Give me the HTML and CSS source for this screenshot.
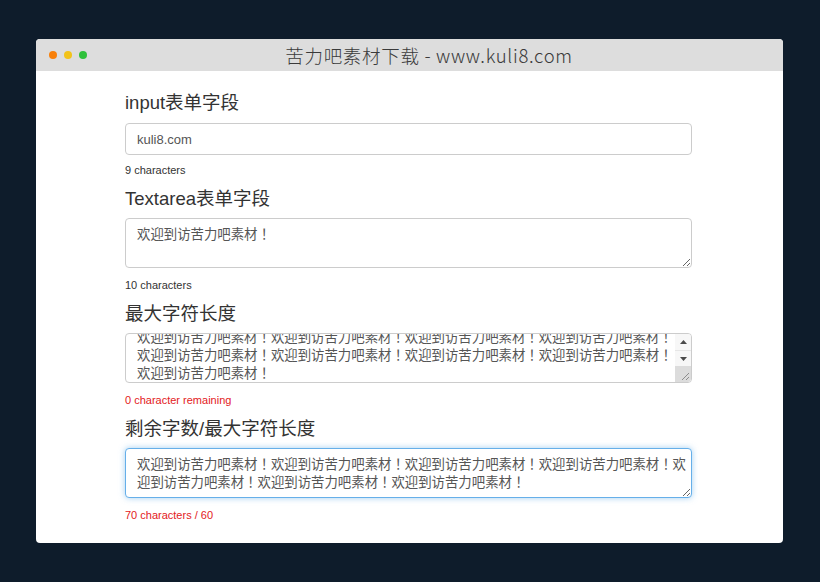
FILE: index.html
```html
<!DOCTYPE html>
<html lang="zh-CN">
<head>
<meta charset="utf-8">
<title>苦力吧素材下载</title>
<link rel="stylesheet" href="styles.css">
</head>
<body>
<div class="window">
  <div class="titlebar">
    <div class="dots">
      <span class="dot dot-orange"></span>
      <span class="dot dot-yellow"></span>
      <span class="dot dot-green"></span>
    </div>
    <div class="title">苦力吧素材下载 - www.kuli8.com</div>
  </div>
  <div class="content">
    <form class="form">
      <div class="group">
        <label class="label">input表单字段</label>
        <input class="control input" type="text" value="kuli8.com">
        <div class="count count-first">9 characters</div>
      </div>
      <div class="group">
        <label class="label">Textarea表单字段</label>
        <textarea class="control area" lang="ja">欢迎到访苦力吧素材！</textarea>
        <div class="count">10 characters</div>
      </div>
      <div class="group">
        <label class="label">最大字符长度</label>
        <div class="control fake-area">
          <div class="fake-view">
            <div class="fake-text" lang="ja">欢迎到访苦力吧素材！欢迎到访苦力吧素材！欢迎到访苦力吧素材！欢迎到访苦力吧素材！欢迎到访苦力吧素材！欢迎到访苦力吧素材！欢迎到访苦力吧素材！欢迎到访苦力吧素材！欢迎到访苦力吧素材！</div>
          </div>
          <div class="sbar">
            <span class="sb-btn">
              <svg width="7" height="4" viewBox="0 0 7 4"><polygon points="3.5,0 7,4 0,4" fill="#4a4a4a"/></svg>
            </span>
            <span class="sb-btn">
              <svg width="7" height="4" viewBox="0 0 7 4"><polygon points="0,0 7,0 3.5,4" fill="#4a4a4a"/></svg>
            </span>
            <span class="sb-corner">
              <svg width="16" height="16" viewBox="0 0 16 16"><path d="M14 7 L7 14 M14 11 L11 14" stroke="#8c8c8c" stroke-width="1" fill="none"/></svg>
            </span>
          </div>
        </div>
        <div class="count warn">0 character remaining</div>
      </div>
      <div class="group">
        <label class="label">剩余字数/最大字符长度</label>
        <textarea class="control area focused" lang="ja">欢迎到访苦力吧素材！欢迎到访苦力吧素材！欢迎到访苦力吧素材！欢迎到访苦力吧素材！欢迎到访苦力吧素材！欢迎到访苦力吧素材！欢迎到访苦力吧素材！</textarea>
        <div class="count warn">70 characters / 60</div>
      </div>
    </form>
  </div>
</div>
</body>
</html>
```

FILE: styles.css
```css
html, body {
  margin: 0;
  padding: 0;
}
body {
  background: #0e1c2b;
  width: 820px;
  height: 582px;
  font-family: "Liberation Sans", "Noto Sans CJK SC", sans-serif;
  color: #333;
  overflow: hidden;
}
.window {
  margin: 39px 0 0 36px;
  width: 747px;
  background: #fff;
  border-radius: 4px;
  overflow: hidden;
}
.titlebar {
  height: 32px;
  background: #dddddd;
  display: flex;
  align-items: center;
}
.dots {
  display: flex;
  gap: 7px;
  padding-left: 13px;
}
.dot {
  width: 8px;
  height: 8px;
  border-radius: 50%;
  display: block;
}
.dot-orange { background: #f8800a; }
.dot-yellow { background: #f2c31a; }
.dot-green { background: #2fc13b; }
.title {
  flex: 1;
  text-align: center;
  padding-right: 12px;
  font-family: "Noto Sans CJK SC", sans-serif;
  font-weight: 300;
  font-size: 18.5px;
  color: #3a3a3a;
  letter-spacing: 0.7px;
}
.content {
  padding: 21px 0 20px;
}
.form {
  width: 567px;
  margin-left: 89px;
}
.group {
  display: flex;
  flex-direction: column;
  margin-bottom: 10px;
}
.group:last-child { margin-bottom: 0; }
.label {
  font-size: 18.5px;
  line-height: 22px;
  margin-bottom: 8px;
  color: #333;
}
.control {
  box-sizing: border-box;
  width: 567px;
  border: 1px solid #cccccc;
  border-radius: 4px;
  background: #fff;
  color: #555;
  font-family: "Liberation Sans", "Noto Sans CJK SC", sans-serif;
  outline: none;
  margin: 0;
}
.input {
  height: 32px;
  padding: 0 11px;
  font-size: 13px;
  margin-top: 1px;
}
.area {
  height: 50px;
  padding: 7px 3px 5px 11px;
  font-family: "Liberation Sans", "Noto Sans CJK JP", sans-serif;
  font-size: 13.4px;
  line-height: 18px;
  resize: vertical;
  display: block;
}
.focused {
  border-color: #66afe9;
  box-shadow: 0 0 6px rgba(102, 175, 233, 0.6);
}
.fake-area {
  height: 50px;
  display: flex;
  overflow: hidden;
}
.fake-view {
  flex: 1;
  overflow: hidden;
  padding: 0 1px 0 11px;
}
.fake-text {
  margin-top: -5px;
  font-family: "Liberation Sans", "Noto Sans CJK JP", sans-serif;
  font-size: 13.4px;
  line-height: 18px;
  color: #555;
  word-break: break-all;
}
.sbar {
  width: 16px;
  display: flex;
  flex-direction: column;
  background: #f1f1f1;
  border-radius: 0 3px 3px 0;
  overflow: hidden;
}
.sb-btn {
  height: 16px;
  display: flex;
  align-items: center;
  justify-content: center;
  background: #f7f7f7;
}
.sb-btn + .sb-btn {
  border-top: 1px solid #e6e6e6;
  height: 15px;
}
.sb-corner {
  flex: 1;
  background: #dcdcdc;
  display: flex;
  align-items: flex-end;
  justify-content: flex-end;
}
.sb-corner svg {
  display: block;
}
.count {
  margin-top: 9px;
  font-size: 11px;
  line-height: 16px;
  color: #333;
}
.count-first {
  margin-top: 7px;
}
.warn {
  color: #e3201c;
}
```
